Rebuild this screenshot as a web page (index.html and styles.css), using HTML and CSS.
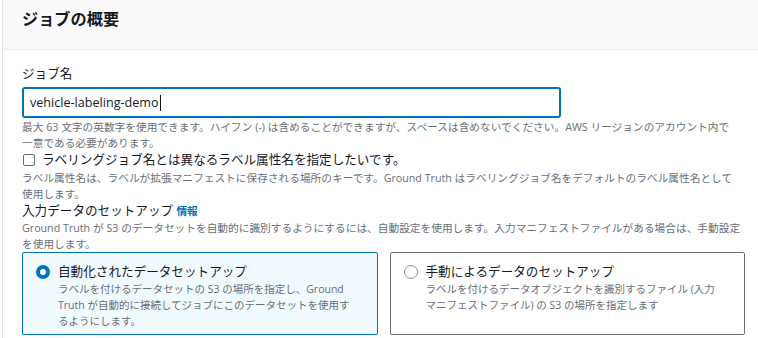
FILE: index.html
```html
<!DOCTYPE html>
<html lang="ja">
<head>
<meta charset="utf-8">
<link rel="stylesheet" href="styles.css">
</head>
<body>
<div class="panel">
  <div class="panel-header"><h2>ジョブの概要</h2></div>
  <div class="panel-body">
    <div class="field">
      <label class="label">ジョブ名</label>
      <div class="input"><span>vehicle-labeling-demo</span><span class="caret"></span></div>
      <p class="hint">最大 63 文字の英数字を使用できます。ハイフン (-) は含めることができますが、スペースは含めないでください。AWS リージョンのアカウント内で一意である必要があります。</p>
    </div>
    <label class="check"><span class="box"></span><span>ラベリングジョブ名とは異なるラベル属性名を指定したいです。</span></label>
    <p class="hint">ラベル属性名は、ラベルが拡張マニフェストに保存される場所のキーです。Ground Truth はラベリングジョブ名をデフォルトのラベル属性名として使用します。</p>
    <div class="label setup">入力データのセットアップ <a class="info">情報</a></div>
    <p class="hint">Ground Truth が S3 のデータセットを自動的に識別するようにするには、自動設定を使用します。入力マニフェストファイルがある場合は、手動設定を使用します。</p>
    <div class="tiles">
      <div class="tile selected">
        <span class="radio on"></span>
        <div class="tile-text">
          <div class="tile-title">自動化されたデータセットアップ</div>
          <div class="tile-desc">ラベルを付けるデータセットの S3 の場所を指定し、Ground Truth が自動的に接続してジョブにこのデータセットを使用するようにします。</div>
        </div>
      </div>
      <div class="tile">
        <span class="radio"></span>
        <div class="tile-text">
          <div class="tile-title">手動によるデータのセットアップ</div>
          <div class="tile-desc">ラベルを付けるデータオブジェクトを識別するファイル (入力マニフェストファイル) の S3 の場所を指定します</div>
        </div>
      </div>
    </div>
  </div>
</div>
</body>
</html>
```
FILE: styles.css
```css
* { box-sizing: border-box; }
html, body { margin: 0; padding: 0; background: #fff; }
body {
  font-family: "Open Sans", "Noto Sans CJK JP", sans-serif;
  color: #16191f;
  font-size: 12.6px;
  width: 758px;
  height: 338px;
  overflow: hidden;
}
.panel {
  margin-left: 2px;
  border-left: 1px solid #e1e4e4;
  height: 338px;
}
.panel-header {
  background: #fafafa;
  border-bottom: 1px solid #eaeded;
  height: 50px;
  padding: 7px 0 0 19px;
}
.panel-header h2 {
  margin: 0;
  font-size: 16.2px;
  font-weight: 700;
  line-height: 24px;
}
.panel-body {
  padding: 13px 0 0 19px;
}
.label {
  display: block;
  font-size: 12.6px;
  line-height: 22px;
}
.input {
  margin-top: 2px;
  width: 539px;
  height: 31px;
  border: 2px solid #0073bb;
  border-radius: 3px;
  padding: 0 6px;
  display: flex;
  align-items: center;
  font-size: 12.6px;
}
.caret {
  display: inline-block;
  width: 1px;
  height: 16px;
  background: #16191f;
  margin-left: 1px;
}
.hint {
  margin: 0;
  width: 718.5px;
  font-size: 10.7px;
  line-height: 16px;
  color: #687078;
}
.field .hint { margin-top: 1px; width: 712px; }
.check {
  display: flex;
  align-items: center;
  gap: 7px;
  line-height: 18px;
  font-size: 12.6px;
}
.box {
  width: 12px;
  height: 12px;
  border: 1px solid #687078;
  border-radius: 2px;
  margin-left: 1px;
  flex: none;
}
.check + .hint { margin-top: 1px; }
.setup { line-height: 18px; }
.info {
  color: #0073bb;
  font-weight: 700;
  font-size: 10.7px;
}
.tiles {
  display: flex;
  gap: 12px;
  width: 723px;
}
.tile {
  flex: 1;
  height: 83px;
  border: 1px solid #687078;
  border-radius: 2px;
  display: flex;
  gap: 8px;
  padding: 10px 13px;
}
.tile.selected {
  background: #f1faff;
  border-color: #0073bb;
}
.tile-text { width: 296px; flex: none; }
.radio {
  flex: none;
  width: 14px;
  height: 14px;
  border-radius: 50%;
  border: 1px solid #879596;
  margin-top: 2px;
}
.radio.on {
  border: 4px solid #0073bb;
  background: #fff;
}
.tile-title { font-size: 12.6px; line-height: 18px; }
.tile-desc { font-size: 10.5px; line-height: 16px; color: #687078; }
```
